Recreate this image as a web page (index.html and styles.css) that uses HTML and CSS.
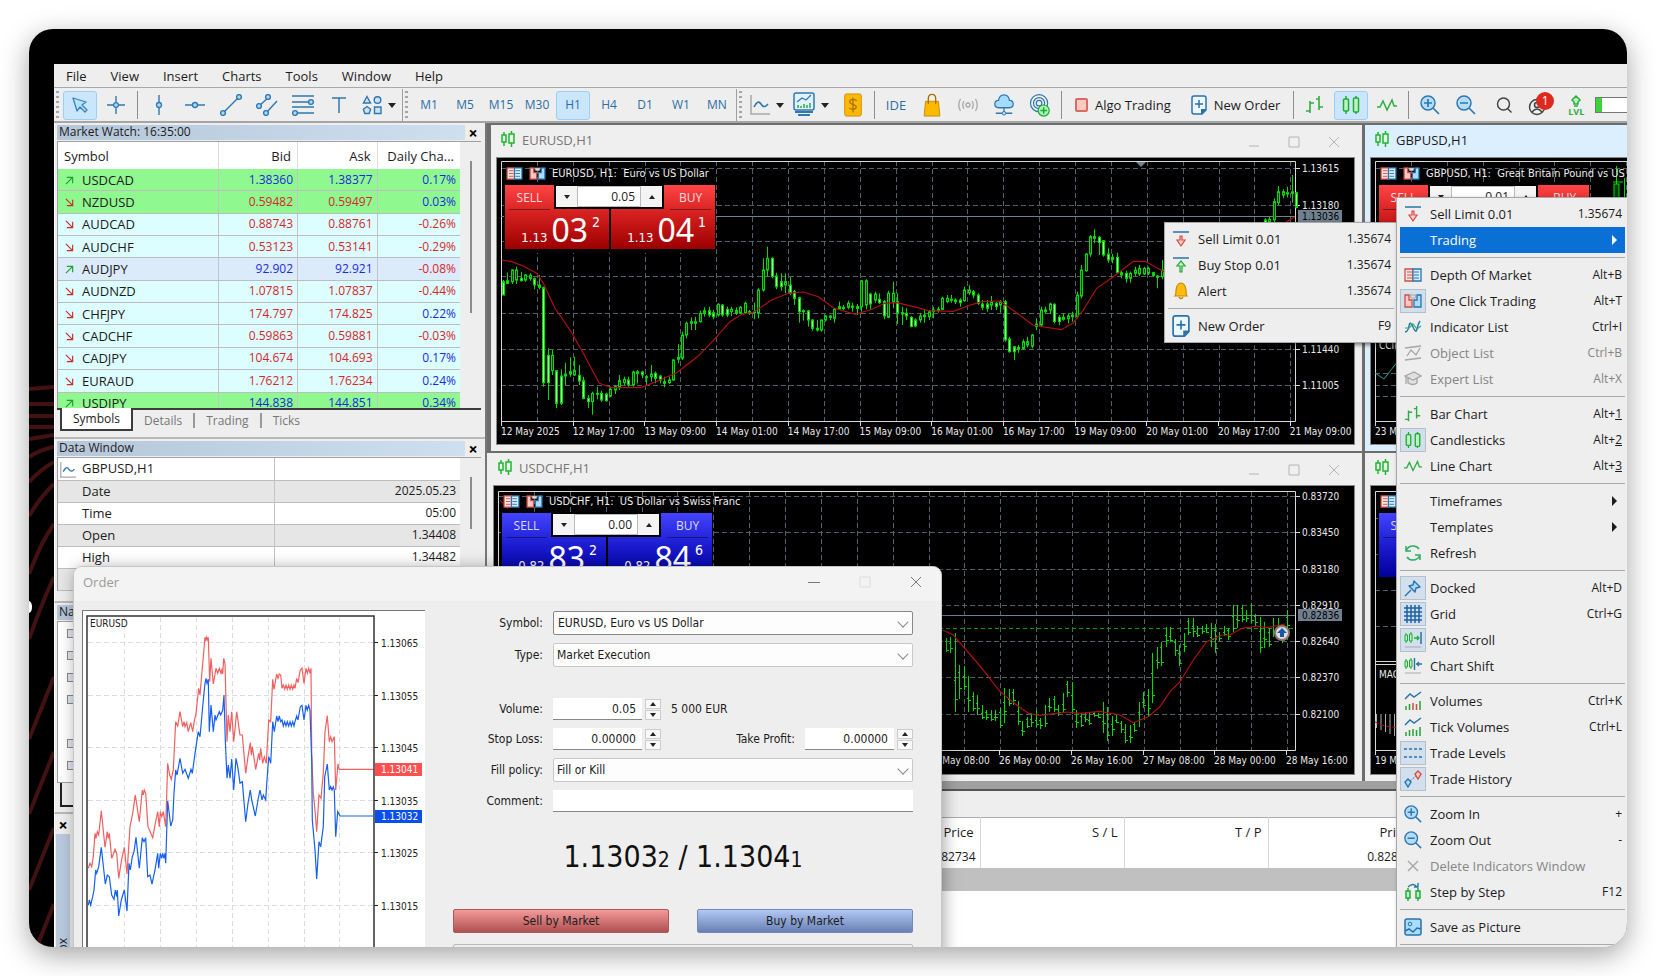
FILE: index.html
```html
<!DOCTYPE html>
<html lang="en">
<head>
<meta charset="utf-8">
<title>Trading terminal</title>
<link rel="stylesheet" href="styles.css">
</head>
<body>
<svg class="sprite" aria-hidden="true">
  <symbol id="i-cursor" viewBox="0 0 20 20"><path d="M3 3l4 13 3-4 5 5 2-2-5-5 4-3z" fill="#b9e1fb" stroke="#3c82b8" stroke-width="1.3" stroke-linejoin="round"/></symbol>
  <symbol id="i-cross" viewBox="0 0 20 20"><path d="M1 10h18M10 1v18" stroke="#2f78b0" stroke-width="1.4"/><circle cx="10" cy="10" r="2.4" fill="#a8dafc" stroke="#2f78b0" stroke-width="1.2"/></symbol>
  <symbol id="i-vline" viewBox="0 0 20 20"><path d="M10 0v20" stroke="#2f78b0" stroke-width="1.4"/><circle cx="10" cy="10" r="2.5" fill="#a8dafc" stroke="#2f78b0" stroke-width="1.3"/></symbol>
  <symbol id="i-hline" viewBox="0 0 20 20"><path d="M0 10h20" stroke="#2f78b0" stroke-width="1.4"/><circle cx="10" cy="10" r="2.5" fill="#a8dafc" stroke="#2f78b0" stroke-width="1.3"/></symbol>
  <symbol id="i-trend" viewBox="0 0 22 22"><path d="M3 19L19 3" stroke="#2f78b0" stroke-width="1.4"/><g fill="#a8dafc" stroke="#2f78b0" stroke-width="1.4"><circle cx="3" cy="19" r="2.4"/><circle cx="19" cy="3" r="2.4"/></g></symbol>
  <symbol id="i-channel" viewBox="0 0 22 22"><path d="M3 12l10-9M10 19L21 7" stroke="#2f78b0" stroke-width="1.4"/><g fill="#a8dafc" stroke="#2f78b0" stroke-width="1.4"><circle cx="3" cy="12" r="2.4"/><circle cx="12" cy="3" r="2.4"/><circle cx="10" cy="19" r="2.4"/></g></symbol>
  <symbol id="i-fibo" viewBox="0 0 22 22"><path d="M0 2h22M0 8h18M0 13h22M4 19h18" stroke="#2f78b0" stroke-width="1.4"/><g fill="#a8dafc" stroke="#2f78b0" stroke-width="1.4"><circle cx="19" cy="8" r="2.4"/><circle cx="3" cy="19" r="2.4"/></g></symbol>
  <symbol id="i-text" viewBox="0 0 20 20"><path d="M3 3h14M10 3v15" stroke="#2f78b0" stroke-width="1.5"/></symbol>
  <symbol id="i-shapes" viewBox="0 0 20 20"><g fill="#a8dafc" fill-opacity=".5" stroke="#2f78b0" stroke-width="1.4"><path d="M5 1.500L8.500 8h-7z"/><circle cx="15.500" cy="5" r="3.300"/><path d="M5 11.500l3.600 2.700-1.400 4.300H2.800l-1.400-4.300z"/><path d="M12.500 12h6.500v6.500h-6.500z"/></g></symbol>
  <symbol id="i-line" viewBox="0 0 20 20"><path d="M1 0v19h19" fill="none" stroke="#a9a9a9" stroke-width="1.5"/><path d="M4 12q4-8 7-3t7 0" fill="none" stroke="#2f78b0" stroke-width="1.6"/></symbol>
  <symbol id="i-ind" viewBox="0 0 22 26"><rect x="1" y="1" width="20" height="17" rx="2" fill="#e2f2fd" stroke="#2f78b0" stroke-width="1.500"/><path d="M4 10l5-4 4 2 5-5" fill="none" stroke="#2f78b0" stroke-width="1.300"/><path d="M5 16v-3M8 16v-2M11 16v-4M14 16v-3M17 16v-5" stroke="#2bae3e" stroke-width="1.500"/><path d="M2 20h18M5 23h12" stroke="#2f78b0" stroke-width="2"/></symbol>
  <symbol id="i-dollar" viewBox="0 0 20 26"><rect x="1" y="1" width="18" height="24" rx="2" fill="#fdb900" stroke="#d08b00"/><path d="M14 8.500c-1-2-7.500-2.300-7.500 1 0 4 7 2 7 5.500 0 3.500-6 3.500-7.500 1M10 5v16" fill="none" stroke="#a97000" stroke-width="1.400"/></symbol>
  <symbol id="i-bag" viewBox="0 0 18 26"><path d="M2 9h14l1.500 16H.5z" fill="#fdb900" stroke="#c98a00"/><path d="M5 12V6q0-4.500 4-4.500T13 6v6" fill="none" stroke="#a97000" stroke-width="1.400"/></symbol>
  <symbol id="i-signal" viewBox="0 0 20 20"><g fill="none" stroke="#a9a9a9" stroke-width="1.300"><circle cx="10" cy="10" r="2"/><path d="M6 6q-2.500 4 0 8M14 6q2.500 4 0 8M2.500 4q-3.500 6 0 12M17.500 4q3.500 6 0 12"/></g></symbol>
  <symbol id="i-cloud" viewBox="0 0 22 24"><path d="M5 15q-4 0-4-4t4-4q1-6 6-6t6 6q4 0 4 4t-4 4z" fill="#a4dcff" stroke="#2f78b0" stroke-width="1.400"/><path d="M11 15v6M2 21h18" stroke="#2f78b0" stroke-width="1.400"/><circle cx="11" cy="21" r="2" fill="#a4dcff" stroke="#2f78b0"/></symbol>
  <symbol id="i-radar" viewBox="0 0 22 26"><g fill="none" stroke="#2f78b0" stroke-width="1.300"><circle cx="10" cy="11" r="9.300"/><circle cx="10" cy="11" r="6"/><circle cx="10" cy="11" r="3"/></g><circle cx="15" cy="19" r="6" fill="#a9f4b0" stroke="#1ba83a" stroke-width="1.300"/><path d="M15 15.500v7M11.500 19h7" stroke="#1ba83a" stroke-width="1.500"/></symbol>
  <symbol id="i-doc" viewBox="0 0 16 20"><path d="M3 1h10q2 0 2 2v12l-4 4H3q-2 0-2-2V3q0-2 2-2z" fill="#eef7fd" stroke="#2873ad" stroke-width="1.500"/><path d="M15 14v1l-4 4h-1v-5z" fill="#2873ad"/><path d="M8 5v8M4 9h8" stroke="#2873ad" stroke-width="1.500"/></symbol>
  <symbol id="i-bars" viewBox="0 0 20 20"><path d="M5 6v12M1 16h4M5 8h4M14 1v14M11 4h3M14 12h4" stroke="#2fae3f" stroke-width="1.600" fill="none"/></symbol>
  <symbol id="i-candles" viewBox="0 0 20 20"><path d="M5 1v18M15 1v18" stroke="#21ad35" stroke-width="1.500"/><rect x="2.500" y="4" width="5" height="12" rx="1" fill="#b9f5c0" stroke="#21ad35" stroke-width="1.500"/><rect x="12.500" y="3" width="5" height="14" rx="1" fill="#b9f5c0" stroke="#21ad35" stroke-width="1.500"/></symbol>
  <symbol id="i-wave" viewBox="0 0 20 20"><path d="M0 12h3l3-6 4 9 5-10 2 6h3" fill="none" stroke="#2fae3f" stroke-width="1.500"/></symbol>
  <symbol id="i-zin" viewBox="0 0 20 20"><circle cx="8" cy="8" r="7" fill="#b3ddfa" stroke="#2f78b0" stroke-width="1.500"/><path d="M8 4v8M4 8h8M13 13l6 6" stroke="#2f78b0" stroke-width="1.700"/></symbol>
  <symbol id="i-zout" viewBox="0 0 20 20"><circle cx="8" cy="8" r="7" fill="#b3ddfa" stroke="#2f78b0" stroke-width="1.500"/><path d="M4 8h8M13 13l6 6" stroke="#2f78b0" stroke-width="1.700"/></symbol>
  <symbol id="i-search" viewBox="0 0 20 20"><circle cx="9.500" cy="9" r="6" fill="none" stroke="#444" stroke-width="1.500"/><path d="M13.500 13.500l4 4" stroke="#444" stroke-width="1.500"/></symbol>
  <symbol id="i-user" viewBox="0 0 24 24"><circle cx="9" cy="14" r="7.500" fill="none" stroke="#444" stroke-width="1.500"/><circle cx="9" cy="12" r="2.500" fill="none" stroke="#444" stroke-width="1.500"/><path d="M4 19q5-6 10 0" fill="none" stroke="#444" stroke-width="1.500"/></symbol>
  <symbol id="i-up" viewBox="0 0 16 12"><path d="M8 1l4 4-2 2v2H6V7L4 5z" fill="#b9f5c0" stroke="#2fae3f" stroke-width="1.500"/><path d="M6 11h4" stroke="#2fae3f" stroke-width="1.500"/></symbol>
  <symbol id="i-mini" viewBox="0 0 14 16"><path d="M3 1v14M10.500 0v16" stroke="#21b52e" stroke-width="1.500"/><path d="M1 4h4v7H1zM8 3h5v9H8z" fill="#e9fbe9" stroke="#21b52e" stroke-width="1.500"/></symbol>
  <symbol id="i-depth" viewBox="0 0 18 14"><path d="M1 1h8v12H1z" fill="#ffe6e2" stroke="#d14d48" stroke-width="1.300"/><path d="M9 1h8v12H9z" fill="#d8efff" stroke="#2873ad" stroke-width="1.300"/><path d="M3 4h5M3 7h5M3 10h5" stroke="#d14d48"/><path d="M10 4h5M10 7h5M10 10h5" stroke="#2873ad"/></symbol>
  <symbol id="i-oct" viewBox="0 0 18 14"><path d="M1 1h4v5h3v7H1z" fill="#ffc9c2" stroke="#d14d48" stroke-width="1.300"/><path d="M17 1h-4v5h-3v7h7z" fill="#a9dcff" stroke="#2873ad" stroke-width="1.300"/><path d="M6 1h6l-1 3H7z" fill="#ddd" stroke="#999" stroke-width=".8"/></symbol>
  <symbol id="i-selllimit" viewBox="0 0 18 16"><path d="M1 1h16" stroke="#2873ad" stroke-width="1.500"/><path d="M8 5v4H5l4 6 4-6h-3V5z" fill="#ffc9c2" stroke="#d14d48" stroke-width="1.200"/></symbol>
  <symbol id="i-buystop" viewBox="0 0 18 16"><path d="M1 1h16" stroke="#2873ad" stroke-width="1.500"/><path d="M8 15V9H5l4-5 4 5h-3v6z" fill="#b9f5c0" stroke="#21a537" stroke-width="1.200"/></symbol>
  <symbol id="i-bell" viewBox="0 0 18 18"><path d="M3 14q1-1 1-6 1-7 5-7t5 7q0 5 1 6z" fill="#fdbb10" stroke="#c98a00" stroke-width="1.200"/><path d="M7 15q2 3 4 0" fill="none" stroke="#c98a00" stroke-width="1.500"/></symbol>
  <symbol id="i-indlist" viewBox="0 0 18 16"><path d="M1 13q3 0 4-6t4 1 4 2 3-8" fill="none" stroke="#2873ad" stroke-width="1.400"/><path d="M1 9h4l4-4 4 5 4-3" fill="none" stroke="#2fae6f" stroke-width="1.200"/></symbol>
  <symbol id="i-objlist" viewBox="0 0 18 16"><path d="M1 3l16-2M1 15l16-2M3 11l4-6 5 5 4-7" fill="none" stroke="#a5a5a5" stroke-width="1.300"/></symbol>
  <symbol id="i-expert" viewBox="0 0 18 16"><path d="M1 5l9-4 7 4-8 4zM4 7v5q5 3 9 0V7M2 6v7" fill="#e0e0e0" stroke="#a5a5a5" stroke-width="1.300"/></symbol>
  <symbol id="i-refresh" viewBox="0 0 18 18"><path d="M2 7q2-5 7-5 4 0 6 3M16 11q-2 5-7 5-4 0-6-3M2 2v5h5M16 16v-5h-5" fill="none" stroke="#2fae5f" stroke-width="1.500"/></symbol>
  <symbol id="i-pin" viewBox="0 0 18 18"><path d="M1 17l6-6M10 2l6 6-4 1-1 4-6-6 4-1z" fill="#a9dcff" stroke="#2873ad" stroke-width="1.400" stroke-linejoin="round"/></symbol>
  <symbol id="i-grid" viewBox="0 0 18 18"><path d="M3 0v18M7 0v18M11 0v18M15 0v18M0 3h18M0 7h18M0 11h18M0 15h18" stroke="#1d62a5" stroke-width="1.500"/></symbol>
  <symbol id="i-scroll" viewBox="0 0 18 18"><path d="M2 2v10M7 1v11" stroke="#21ad35"/><path d="M1 4h2.500v6H1zM5.500 3H8v7H5.500z" fill="#b9f5c0" stroke="#21ad35"/><path d="M10 7h5M13 5l2 2-2 2" fill="none" stroke="#21ad35" stroke-width="1.300"/><path d="M17 1v12" stroke="#2873ad" stroke-width="1.500"/><path d="M1 16h16" stroke="#aaa"/></symbol>
  <symbol id="i-shift" viewBox="0 0 18 18"><path d="M2 2v10M7 1v11" stroke="#21ad35"/><path d="M1 4h2.500v6H1zM5.500 3H8v7H5.500z" fill="#b9f5c0" stroke="#21ad35"/><path d="M10.500 1v12M12 7h6M15 5l-2 2 2 2" fill="none" stroke="#2873ad" stroke-width="1.400"/><path d="M1 16h16" stroke="#aaa"/></symbol>
  <symbol id="i-vol" viewBox="0 0 18 18"><path d="M1 7l5-5 4 3 7-5" fill="none" stroke="#2873ad" stroke-width="1.500"/><path d="M2 18v-4M5.500 18v-6M16 18V9" stroke="#21a537" stroke-width="1.500"/><path d="M9 18v-7M12.500 18v-6" stroke="#d14d48" stroke-width="1.500"/></symbol>
  <symbol id="i-tick" viewBox="0 0 18 18"><path d="M1 7l5-5 4 3 7-5" fill="none" stroke="#2873ad" stroke-width="1.500"/><path d="M2 18v-4M5.500 18v-6M9 18v-7M12.500 18v-6M16 18V9" stroke="#21a537" stroke-width="1.500"/></symbol>
  <symbol id="i-levels" viewBox="0 0 18 18"><path d="M0 5h18M0 13h18" stroke="#2873ad" stroke-width="1.500" stroke-dasharray="3 2"/></symbol>
  <symbol id="i-hist" viewBox="0 0 18 18"><path d="M6 11l6-5" stroke="#2873ad" stroke-dasharray="2 1.500"/><path d="M4 17l-3-5 3-3 3 3z" fill="#a9dcff" stroke="#2873ad" stroke-width="1.400"/><path d="M14 9l-3-5 3-3 3 3z" fill="#ffc9c2" stroke="#d14d48" stroke-width="1.400"/></symbol>
  <symbol id="i-x" viewBox="0 0 18 18"><path d="M4 4l10 10M14 4L4 14" stroke="#aaa" stroke-width="1.500"/></symbol>
  <symbol id="i-step" viewBox="0 0 18 18"><path d="M4 5v13M14 5v13" stroke="#21a537" stroke-width="1.400"/><path d="M2 8h4v7H2zM12 8h4v7h-4z" fill="#b9f5c0" stroke="#21a537" stroke-width="1.400"/><path d="M4 4q5-5 9 0M14 0v4h-4" fill="none" stroke="#2873ad" stroke-width="1.400"/></symbol>
  <symbol id="i-pic" viewBox="0 0 18 18"><rect x="1" y="1" width="16" height="16" rx="2" fill="#a9dcff" stroke="#2873ad" stroke-width="1.500"/><circle cx="6" cy="6" r="1.800" fill="none" stroke="#2873ad"/><path d="M1 13l4-2 4 3 4-4 4 1" fill="none" stroke="#2873ad" stroke-width="1.500"/></symbol>
  <symbol id="i-aup" viewBox="0 0 10 10"><path d="M1 9l7.500-7.500M2 1.500h6.500V8" fill="none" stroke="#1fa32f" stroke-width="1.300"/></symbol>
  <symbol id="i-adn" viewBox="0 0 10 10"><path d="M1 1l7.500 7.500M2 8.500h6.500V2" fill="none" stroke="#d02b2b" stroke-width="1.300"/></symbol>
</svg>

<main class="frame">
  <svg class="frame-art" width="25" height="883" aria-hidden="true">
    <g fill="none" stroke="#421112" stroke-width="4">
      <path d="M0 325l25-2M0 340h25M0 352h25M0 363h25M0 375l25-4M0 393q12-8 25-10M0 418q12-13 25-20M0 452q12-20 25-32M0 510q12-32 25-50M0 575q12-34 25-62M0 675l25-62M0 750l25-62M0 826l25-62M0 902l25-62M0 976l25-62"/>
    </g>
    <path d="M0 537q3 1 3 6t-3 6z" fill="#fff"/>
  </svg>
  <div class="app">
    <nav class="menubar" aria-label="Main menu">
      <button>File</button><button>View</button><button>Insert</button><button>Charts</button><button>Tools</button><button>Window</button><button>Help</button>
    </nav>
    <div class="toolbar" role="toolbar">
      <i class="grip"></i>
      <button class="tool tool--on" aria-label="Cursor"><svg width="20" height="20"><use href="#i-cursor"/></svg></button>
      <button class="tool" aria-label="Crosshair"><svg width="20" height="20"><use href="#i-cross"/></svg></button>
      <i class="sep"></i>
      <button class="tool" aria-label="Vertical line"><svg width="20" height="20"><use href="#i-vline"/></svg></button>
      <button class="tool" aria-label="Horizontal line"><svg width="20" height="20"><use href="#i-hline"/></svg></button>
      <button class="tool" aria-label="Trendline"><svg width="22" height="22"><use href="#i-trend"/></svg></button>
      <button class="tool" aria-label="Channel"><svg width="22" height="22"><use href="#i-channel"/></svg></button>
      <button class="tool" aria-label="Fibonacci"><svg width="22" height="22"><use href="#i-fibo"/></svg></button>
      <button class="tool" aria-label="Text"><svg width="20" height="20"><use href="#i-text"/></svg></button>
      <button class="tool tool--combo" aria-label="Shapes"><svg width="20" height="20"><use href="#i-shapes"/></svg><i class="caret"></i></button>
      <i class="edge"></i><i class="grip"></i>
      <button class="tool">M1</button><button class="tool">M5</button><button class="tool">M15</button><button class="tool">M30</button><button class="tool tool--on">H1</button><button class="tool">H4</button><button class="tool">D1</button><button class="tool">W1</button><button class="tool">MN</button>
      <i class="edge"></i><i class="grip"></i>
      <button class="tool tool--combo" aria-label="Chart type"><svg width="20" height="20"><use href="#i-line"/></svg><i class="caret"></i></button>
      <button class="tool tool--combo tool--last" aria-label="Indicators"><svg width="22" height="26"><use href="#i-ind"/></svg><i class="caret"></i></button>
      <button class="tool" aria-label="Quotes"><svg width="20" height="24"><use href="#i-dollar"/></svg></button>
      <i class="sep"></i>
      <button class="tool tool--ide">IDE</button>
      <button class="tool" aria-label="Market"><svg width="18" height="24"><use href="#i-bag"/></svg></button>
      <button class="tool" aria-label="Signals"><svg width="20" height="20"><use href="#i-signal"/></svg></button>
      <button class="tool" aria-label="Cloud"><svg width="22" height="22"><use href="#i-cloud"/></svg></button>
      <button class="tool" aria-label="VPS"><svg width="22" height="24"><use href="#i-radar"/></svg></button>
      <i class="sep"></i>
      <button class="tool tool--wide"><i class="stop"></i>Algo Trading</button>
      <button class="tool tool--wide"><svg width="16" height="20"><use href="#i-doc"/></svg>New Order</button>
      <i class="sep"></i>
      <button class="tool" aria-label="Bars"><svg width="20" height="20"><use href="#i-bars"/></svg></button>
      <button class="tool tool--on" aria-label="Candles"><svg width="20" height="20"><use href="#i-candles"/></svg></button>
      <button class="tool" aria-label="Line"><svg width="20" height="20"><use href="#i-wave"/></svg></button>
      <i class="sep"></i>
      <button class="tool" aria-label="Zoom in"><svg width="20" height="20"><use href="#i-zin"/></svg></button>
      <button class="tool" aria-label="Zoom out"><svg width="20" height="20"><use href="#i-zout"/></svg></button>
      <button class="tool tool--gap" aria-label="Search"><svg width="20" height="20"><use href="#i-search"/></svg></button>
      <button class="tool tool--user" aria-label="Account"><svg width="24" height="24"><use href="#i-user"/></svg><b class="badge">1</b></button>
      <button class="tool tool--lvl"><svg width="16" height="12"><use href="#i-up"/></svg>LVL</button>
      <i class="meter"></i>
    </div>

    <div class="workspace">
      <aside class="sidebar">
        <section class="panel panel--market">
          <header class="panel-title"><h2>Market Watch: 16:35:00</h2><button aria-label="Close">×</button></header>
          <div class="panel-body">
            <table class="quotes">
              <thead><tr><th>Symbol</th><th>Bid</th><th>Ask</th><th>Daily Cha...</th></tr></thead>
              <tbody>
                <tr class="hot up"><td><svg width="9" height="9"><use href="#i-aup"/></svg>USDCAD</td><td>1.38360</td><td>1.38377</td><td class="pos">0.17%</td></tr>
                <tr class="hot"><td><svg width="9" height="9"><use href="#i-adn"/></svg>NZDUSD</td><td>0.59482</td><td>0.59497</td><td class="pos">0.03%</td></tr>
                <tr><td><svg width="9" height="9"><use href="#i-adn"/></svg>AUDCAD</td><td>0.88743</td><td>0.88761</td><td>-0.26%</td></tr>
                <tr><td><svg width="9" height="9"><use href="#i-adn"/></svg>AUDCHF</td><td>0.53123</td><td>0.53141</td><td>-0.29%</td></tr>
                <tr class="sel up"><td><svg width="9" height="9"><use href="#i-aup"/></svg>AUDJPY</td><td>92.902</td><td>92.921</td><td class="neg">-0.08%</td></tr>
                <tr><td><svg width="9" height="9"><use href="#i-adn"/></svg>AUDNZD</td><td>1.07815</td><td>1.07837</td><td>-0.44%</td></tr>
                <tr><td><svg width="9" height="9"><use href="#i-adn"/></svg>CHFJPY</td><td>174.797</td><td>174.825</td><td class="pos">0.22%</td></tr>
                <tr><td><svg width="9" height="9"><use href="#i-adn"/></svg>CADCHF</td><td>0.59863</td><td>0.59881</td><td>-0.03%</td></tr>
                <tr><td><svg width="9" height="9"><use href="#i-adn"/></svg>CADJPY</td><td>104.674</td><td>104.693</td><td class="pos">0.17%</td></tr>
                <tr><td><svg width="9" height="9"><use href="#i-adn"/></svg>EURAUD</td><td>1.76212</td><td>1.76234</td><td class="pos">0.24%</td></tr>
                <tr class="hot up"><td><svg width="9" height="9"><use href="#i-aup"/></svg>USDJPY</td><td>144.838</td><td>144.851</td><td class="pos">0.34%</td></tr>
              </tbody>
            </table>
            <div class="rail"><i class="thumb"></i></div>
          </div>
          <div class="tabs" role="tablist">
            <button class="tab tab--on" role="tab">Symbols</button><button class="tab" role="tab">Details</button><button class="tab" role="tab">Trading</button><button class="tab" role="tab">Ticks</button>
          </div>
        </section>
        <section class="panel panel--data">
          <header class="panel-title"><h2>Data Window</h2><button aria-label="Close">×</button></header>
          <div class="panel-body">
            <table class="values">
              <tr><th><svg width="16" height="16"><use href="#i-line"/></svg>GBPUSD,H1</th><td></td></tr>
              <tr><th>Date</th><td>2025.05.23</td></tr>
              <tr><th>Time</th><td>05:00</td></tr>
              <tr><th>Open</th><td>1.34408</td></tr>
              <tr><th>High</th><td>1.34482</td></tr>
              <tr><th>&nbsp;</th><td></td></tr>
            </table>
            <div class="rail"><i class="thumb thumb--short"></i></div>
          </div>
        </section>
        <section class="panel panel--nav">
          <header class="panel-title"><h2>Navigator</h2></header>
          <div class="tree"><i></i><i></i><i></i><i></i><i class="skip"></i><i></i><i></i></div>
          <div class="tree-foot"></div>
        </section>
        <section class="panel panel--box">
          <button class="box-close" aria-label="Close">×</button>
          <h2 class="box-title">Toolbox</h2>
        </section>
      </aside>

      <div class="desk">
        <div class="charts">
          <section class="chart-window chart-window--first">
            <header><svg width="14" height="16"><use href="#i-mini"/></svg><h2>EURUSD,H1</h2><span class="win-btns"><button aria-label="Minimize"><svg width="12" height="12"><path d="M1 10h10"/></svg></button><button aria-label="Maximize"><svg width="12" height="12"><path d="M1 1h10v10H1z"/></svg></button><button aria-label="Close"><svg width="12" height="12"><path d="M1 1l10 10M11 1L1 11"/></svg></button></span></header>
            <div class="chart">
              <svg class="plot" id="plot-eurusd" width="857" height="286"></svg>
              <p class="chart-name"><svg width="17" height="13"><use href="#i-depth"/></svg><svg width="17" height="13"><use href="#i-oct"/></svg>EURUSD, H1:&nbsp; Euro vs US Dollar</p>
              <div class="trade">
                <button class="deal"><span>SELL</span><em>1.13</em><strong>03</strong><sup>2</sup></button><button class="deal deal--buy"><span>BUY</span><em>1.13</em><strong>04</strong><sup>1</sup></button>
                <div class="lot"><button aria-label="Less"><i class="tri tri--down"></i></button><input aria-label="Volume" value="0.05"><button aria-label="More"><i class="tri"></i></button></div>
              </div>
            </div>
          </section>
          <section class="chart-window chart-window--side chart-window--active">
            <header><svg width="14" height="16"><use href="#i-mini"/></svg><h2>GBPUSD,H1</h2></header>
            <div class="chart">
              <svg class="plot" id="plot-gbpusd" width="857" height="286"></svg>
              <p class="chart-name"><svg width="17" height="13"><use href="#i-depth"/></svg><svg width="17" height="13"><use href="#i-oct"/></svg>GBPUSD, H1:&nbsp; Great Britain Pound vs US</p>
              <div class="trade">
                <button class="deal"><span>SELL</span></button><button class="deal deal--buy"><span>BUY</span></button>
                <div class="lot"><button aria-label="Less"><i class="tri tri--down"></i></button><input aria-label="Volume" value="0.01"><button aria-label="More"><i class="tri"></i></button></div>
              </div>
            </div>
          </section>
          <section class="chart-window">
            <header><svg width="14" height="16"><use href="#i-mini"/></svg><h2>USDCHF,H1</h2><span class="win-btns"><button aria-label="Minimize"><svg width="12" height="12"><path d="M1 10h10"/></svg></button><button aria-label="Maximize"><svg width="12" height="12"><path d="M1 1h10v10H1z"/></svg></button><button aria-label="Close"><svg width="12" height="12"><path d="M1 1l10 10M11 1L1 11"/></svg></button></span></header>
            <div class="chart">
              <svg class="plot" id="plot-usdchf" width="860" height="287"></svg>
              <p class="chart-name"><svg width="17" height="13"><use href="#i-depth"/></svg><svg width="17" height="13"><use href="#i-oct"/></svg>USDCHF, H1:&nbsp; US Dollar vs Swiss Franc</p>
              <div class="trade trade--blue">
                <button class="deal"><span>SELL</span><em>0.82</em><strong>83</strong><sup>2</sup></button><button class="deal deal--buy"><span>BUY</span><em>0.82</em><strong>84</strong><sup>6</sup></button>
                <div class="lot"><button aria-label="Less"><i class="tri tri--down"></i></button><input aria-label="Volume" value="0.00"><button aria-label="More"><i class="tri"></i></button></div>
              </div>
            </div>
          </section>
          <section class="chart-window chart-window--side">
            <header><svg width="14" height="16"><use href="#i-mini"/></svg></header>
            <div class="chart">
              <svg class="plot" id="plot-last" width="857" height="287"></svg>
              <p class="chart-name"><svg width="17" height="13"><use href="#i-depth"/></svg></p>
              <div class="trade trade--blue">
                <button class="deal"><span>SELL</span></button><button class="deal deal--buy"><span>BUY</span></button>
              </div>
            </div>
          </section>
        </div>
        <section class="toolbox">
          <table class="positions">
            <thead><tr><th>Price</th><th>S / L</th><th>T / P</th><th>Price</th><th></th></tr></thead>
            <tbody><tr><td>0.82734</td><td></td><td></td><td>0.82836</td><td></td></tr></tbody>
          </table>
          <div class="balance"></div>
        </section>
      </div>
    </div>

    <section class="dialog" role="dialog" aria-label="Order">
      <header><h2>Order</h2><span class="dlg-btns"><button aria-label="Minimize"><svg width="12" height="12"><path d="M0 6.500h12"/></svg></button><button aria-label="Maximize" disabled><svg width="12" height="12"><path d="M1 1h10v10H1z"/></svg></button><button aria-label="Close"><svg width="12" height="12"><path d="M1 1l10 10M11 1L1 11"/></svg></button></span></header>
      <div class="dlg-body">
        <div class="tick-chart"><svg id="plot-ticks" width="343" height="360"></svg></div>
        <form class="order">
          <label for="f-symbol">Symbol:</label>
          <div class="pick pick--main"><select id="f-symbol"><option>EURUSD, Euro vs US Dollar</option></select></div>
          <label for="f-type">Type:</label>
          <div class="pick"><select id="f-type"><option>Market Execution</option></select></div>
          <label class="row-volume" for="f-vol">Volume:</label>
          <div class="row-fields row-volume"><input id="f-vol" value="0.05"><span class="spin"><button type="button" aria-label="Up"><i class="tri"></i></button><button type="button" aria-label="Down"><i class="tri tri--down"></i></button></span><span class="unit">5 000 EUR</span></div>
          <label for="f-sl">Stop Loss:</label>
          <div class="row-fields"><input id="f-sl" value="0.00000"><span class="spin"><button type="button" aria-label="Up"><i class="tri"></i></button><button type="button" aria-label="Down"><i class="tri tri--down"></i></button></span><label class="tp" for="f-tp">Take Profit:</label><input id="f-tp" value="0.00000"><span class="spin"><button type="button" aria-label="Up"><i class="tri"></i></button><button type="button" aria-label="Down"><i class="tri tri--down"></i></button></span></div>
          <label for="f-fill">Fill policy:</label>
          <div class="pick"><select id="f-fill"><option>Fill or Kill</option></select></div>
          <label for="f-com">Comment:</label>
          <input id="f-com" class="comment">
          <p class="price">1.1303<small>2</small> / 1.1304<small>1</small></p>
          <div class="actions"><button type="button" class="act act--sell">Sell by Market</button><button type="button" class="act act--buy">Buy by Market</button></div>
          <div class="note"></div>
        </form>
      </div>
    </section>

    <div class="menu menu--sub" role="menu">
      <button><svg width="18" height="16"><use href="#i-selllimit"/></svg>Sell Limit 0.01<kbd>1.35674</kbd></button>
      <button><svg width="18" height="16"><use href="#i-buystop"/></svg>Buy Stop 0.01<kbd>1.35674</kbd></button>
      <button><svg width="18" height="18"><use href="#i-bell"/></svg>Alert<kbd>1.35674</kbd></button>
      <hr>
      <button><svg width="18" height="18"><use href="#i-doc"/></svg>New Order<kbd>F9</kbd></button>
    </div>

    <div class="menu menu--main" role="menu">
      <button><svg width="18" height="16"><use href="#i-selllimit"/></svg>Sell Limit 0.01<kbd>1.35674</kbd></button>
      <button class="hover"><svg width="18" height="16"></svg>Trading<i class="more"></i></button>
      <hr>
      <button><svg width="18" height="14"><use href="#i-depth"/></svg>Depth Of Market<kbd>Alt+B</kbd></button>
      <button class="on"><svg width="18" height="14"><use href="#i-oct"/></svg>One Click Trading<kbd>Alt+T</kbd></button>
      <button><svg width="18" height="16"><use href="#i-indlist"/></svg>Indicator List<kbd>Ctrl+I</kbd></button>
      <button disabled><svg width="18" height="16"><use href="#i-objlist"/></svg>Object List<kbd>Ctrl+B</kbd></button>
      <button disabled><svg width="18" height="16"><use href="#i-expert"/></svg>Expert List<kbd>Alt+X</kbd></button>
      <hr>
      <button><svg width="18" height="16"><use href="#i-bars"/></svg>Bar Chart<kbd>Alt+<u>1</u></kbd></button>
      <button class="on"><svg width="18" height="18"><use href="#i-candles"/></svg>Candlesticks<kbd>Alt+<u>2</u></kbd></button>
      <button><svg width="18" height="18"><use href="#i-wave"/></svg>Line Chart<kbd>Alt+<u>3</u></kbd></button>
      <hr>
      <button><svg width="18" height="18"></svg>Timeframes<i class="more"></i></button>
      <button><svg width="18" height="18"></svg>Templates<i class="more"></i></button>
      <button><svg width="18" height="18"><use href="#i-refresh"/></svg>Refresh</button>
      <hr>
      <button class="on"><svg width="18" height="18"><use href="#i-pin"/></svg>Docked<kbd>Alt+D</kbd></button>
      <button class="on"><svg width="18" height="18"><use href="#i-grid"/></svg>Grid<kbd>Ctrl+G</kbd></button>
      <button class="on"><svg width="18" height="18"><use href="#i-scroll"/></svg>Auto Scroll</button>
      <button><svg width="18" height="18"><use href="#i-shift"/></svg>Chart Shift</button>
      <hr>
      <button><svg width="18" height="18"><use href="#i-vol"/></svg>Volumes<kbd>Ctrl+K</kbd></button>
      <button><svg width="18" height="18"><use href="#i-tick"/></svg>Tick Volumes<kbd>Ctrl+L</kbd></button>
      <button class="on"><svg width="18" height="18"><use href="#i-levels"/></svg>Trade Levels</button>
      <button class="on"><svg width="18" height="18"><use href="#i-hist"/></svg>Trade History</button>
      <hr>
      <button><svg width="18" height="18"><use href="#i-zin"/></svg>Zoom In<kbd>+</kbd></button>
      <button><svg width="18" height="18"><use href="#i-zout"/></svg>Zoom Out<kbd>-</kbd></button>
      <button disabled><svg width="18" height="18"><use href="#i-x"/></svg>Delete Indicators Window</button>
      <button><svg width="18" height="18"><use href="#i-step"/></svg>Step by Step<kbd>F12</kbd></button>
      <hr>
      <button><svg width="18" height="18"><use href="#i-pic"/></svg>Save as Picture</button>
      <hr>
    </div>
  </div>
</main>
<script src="charts.js"></script>
</body>
</html>
```
FILE: charts.js
```js
// Draws the price charts. Series are stored in thirds of a pixel.
const NS = 'http://www.w3.org/2000/svg';

function add(svg, tag, attrs, text) {
  const el = document.createElementNS(NS, tag);
  for (const k in attrs) el.setAttribute(k, attrs[k]);
  if (text !== undefined) el.textContent = text;
  svg.appendChild(el);
  return el;
}

function grid(svg, o) {
  for (let x = o.gx; x < o.right; x += 35.87) add(svg, 'path', { class: 'grid', d: `M${Math.round(x) + .5} ${o.top}V${o.bottom}` });
  o.rows.forEach(y => add(svg, 'path', { class: 'grid', d: `M${o.left} ${y + .5}H${o.right}` }));
  add(svg, 'path', { class: 'axis', d: `M${o.left + .5} ${o.bottom + .5}V${o.top + .5}H${o.right + .5}V${o.bottom + .5}H${o.left}` });
  o.prices.forEach((p, i) => {
    if (!p) return;
    add(svg, 'path', { class: 'axis', d: `M${o.right} ${o.rows[i] + .5}h5` });
    add(svg, 'text', { x: o.right + 7, y: o.rows[i] + 4 }, p);
  });
  o.times.forEach(([x, t]) => {
    add(svg, 'path', { class: 'axis', d: `M${Math.round(x) + .5} ${o.bottom}v5` });
    add(svg, 'text', { x, y: o.bottom + 14 }, t);
  });
}

function line(svg, cls, pts, dx, dy) {
  const d = pts.trim().split(/\s+/).map(p => p.split(',').map(Number)).map(([x, y]) => `${(x / 3 + dx).toFixed(1)},${(y / 3 + dy).toFixed(1)}`).join(' ');
  add(svg, 'polyline', { class: cls, points: d });
}

// EURUSD: high, body top, body bottom, low
const eur = `480,485,525,525 458,482,490,492 448,450,485,492 440,450,480,492 455,475,482,485 462,465,480,485 460,466,475,482 472,476,495,508 465,495,502,508 500,503,788,800 685,706,788,840 690,706,752,765 750,752,850,865 748,768,850,855 728,762,768,795 712,755,762,770 710,752,765,768 735,766,783,795 770,782,835,838 825,835,845,865 815,820,845,884 800,820,822,838 812,820,840,845 818,822,842,845 800,808,828,832 795,800,810,822 765,782,800,810 770,778,788,795 770,780,795,800 752,756,795,800 750,755,760,790 752,756,765,775 765,770,772,795 735,762,770,785 755,760,775,790 765,768,780,790 770,785,790,802 770,780,788,792 718,720,780,782 672,712,718,730 635,645,715,720 605,610,645,655 592,605,610,630 590,605,610,630 572,580,605,608 562,572,580,590 560,572,585,592 570,578,590,598 550,553,585,590 552,555,585,590 560,568,585,592 560,568,575,588 562,572,580,585 558,562,580,582 545,550,578,580 570,575,580,585 548,575,578,598 505,510,578,595 415,450,510,515 380,415,450,470 412,415,470,475 458,468,500,508 460,485,500,512 460,485,495,520 470,495,520,525 510,515,535,555 530,533,575,608 568,572,575,602 570,573,600,620 598,600,625,632 600,625,630,635 598,600,630,635 585,588,600,605 585,588,592,600 565,568,595,608 545,560,568,570 555,562,566,570 542,550,562,568 548,558,562,575 552,560,565,585 480,482,560,575 478,482,555,568 518,522,552,570 515,522,540,548 520,538,548,552 540,545,588,598 512,520,592,595 485,520,545,565 520,545,580,612 560,578,582,615 565,580,588,600 588,592,620,622 595,600,618,622 580,588,600,608 570,585,590,608 570,575,590,600 560,570,575,595 560,568,572,578 530,535,568,570 525,535,545,550 525,538,540,548 535,540,545,552 535,540,548,560 500,510,542,545 495,510,518,525 510,515,525,535 520,525,550,555 540,552,562,570 540,552,565,575 528,545,555,570 545,550,560,570 540,545,555,578 540,545,660,665 650,657,695,698 678,680,695,720 675,682,688,698 658,665,685,690 650,665,675,682 643,645,678,685 595,612,620,630 560,570,615,618 560,570,575,580 548,552,570,582 550,553,605,610 585,592,605,615 580,592,598,602 580,588,596,610 575,585,590,605 515,525,590,595 435,450,528,535 400,402,452,455 345,350,402,410 328,350,355,370 348,352,368,405 360,362,405,410 385,402,420,428 402,412,418,430 398,412,458,460 450,458,465,475 452,460,475,488 455,460,475,488 440,450,460,468 435,445,462,468 440,445,462,465 440,445,460,465 455,458,466,470 465,468,472,505 420,450,470,478 430,455,468,480`;
const eurTail = '295,300,340,350 290,298,305,330 235,245,300,306 198,215,248,255 208,215,225,235 200,218,222,232 165,215,220,248 215,218,262,265';
const eurMa = '65,420 95,425 130,438 170,460 190,490 225,565 270,630 310,700 358,790 395,803 485,802 540,780 590,758 650,712 700,662 750,605 785,583 820,577 875,540 925,520 970,516 1015,530 1060,563 1125,583 1170,570 1215,550 1250,548 1310,562 1345,572 1420,574 1470,556 1505,545 1560,543 1605,575 1660,616 1744,629 1780,608 1810,570 1850,505 1900,470 1960,424 1995,424 2052,455 2120,470 2300,400 2420,305 2445,290';

function candles(svg, data, start, dx, dy) {
  let prev = 0;
  data.split(' ').forEach((c, i) => {
    const [h, a, b, l] = c.split(',').map(v => v / 3 + dy);
    const x = Math.round((68 + 13.45 * (start + i)) / 3 + dx);
    const falling = (a + b) / 2 > prev;
    prev = (a + b) / 2;
    add(svg, 'path', { class: 'wick', d: `M${x + .5} ${h.toFixed(1)}V${l.toFixed(1)}` });
    add(svg, 'rect', { class: falling ? 'fall' : 'rise', x: x - .5, y: a.toFixed(1), width: 2, height: Math.max(1, b - a).toFixed(1) });
  });
}

const e = document.getElementById('plot-eurusd');
const times = ['12 May 2025', '12 May 17:00', '13 May 09:00', '14 May 01:00', '14 May 17:00', '15 May 09:00', '16 May 01:00', '16 May 17:00', '19 May 09:00', '20 May 01:00', '20 May 17:00', '21 May 09:00'];
grid(e, { left: 4, right: 798, top: 3, bottom: 263, gx: 40, rows: [10, 47, 83, 118, 155, 191, 227], prices: ['1.13615', '1.13180', '', '', '', '1.11440', '1.11005'], times: times.map((t, i) => [4 + i * 71.7, t]) });
add(e, 'path', { class: 'bid', d: 'M4 58.500H798' });
candles(e, eur, 0, -17, -38);
candles(e, eurTail, 170, -17, -38);
line(e, 'ma', eurMa, -17, -38);
add(e, 'path', { d: 'M639 4h10l-5 5z', fill: '#708090' });
add(e, 'rect', { x: 801, y: 52, width: 44, height: 12, fill: '#708090' });
add(e, 'text', { x: 805, y: 62, class: 'dark' }, '1.13036');

// USDCHF: high, low
const chf = '565,605 560,608 550,785 645,748 648,720 678,785 725,782 735,795 765,808 780,810 780,812 780,812 775,835 715,820 718,768 718,765 752,825 812,858 800,835 790,830 780,830 805,838 765,830 745,785 738,785 765,798 730,785 692,742 695,792 780,835 790,830 790,815 790,825 785,800 790,805 755,850 770,872 798,858 795,820 812,850 822,880 825,878 815,845 755,830 725,775 718,802 610,758 592,658 575,648 530,590 530,575 568,618 585,648 550,605 505,555 505,560 528,562 528,552 522,548 520,590 522,608 545,572 528,558 535,570 465,545 465,535 465,515 480,515 460,520 492,528 500,610 515,595 535,592 505,560 505,540 530,578 480,535';
const u = document.getElementById('plot-usdchf');
grid(u, { left: 4, right: 801, top: 5, bottom: 264, gx: 40, rows: [10, 46, 83, 119, 155, 191, 228], prices: ['0.83720', '0.83450', '0.83180', '0.82910', '0.82640', '0.82370', '0.82100'], times: [[434, '23 May 08:00'], [505, '26 May 00:00'], [577, '26 May 16:00'], [649, '27 May 08:00'], [720, '28 May 00:00'], [792, '28 May 16:00']] });
add(u, 'path', { class: 'bid', d: 'M4 129.500H801' });
add(u, 'path', { d: 'M4 142.500H801', stroke: '#0a9a0a', 'stroke-dasharray': '4 3' });
chf.split(' ').forEach((c, i) => {
  const [h, l] = c.split(',').map(v => Math.round(v / 3 - 36));
  const x = Math.round((78 + 13.45 * i) / 3 + 426);
  const s = (l - h);
  add(u, 'path', { class: 'wick', d: `M${x + .5} ${h}v${s}M${x - 1} ${Math.round(h + s * (i % 3 + 1) / 5) + .5}h2M${x} ${Math.round(h + s * (5 - i % 2) / 6) + .5}h3` });
});
line(u, 'ma', '68,540 100,555 130,590 180,648 240,725 290,765 325,790 360,796 440,786 480,790 540,784 600,795 640,818 685,800 720,770 750,725 780,695 820,630 860,575 905,555 930,555 965,535 1010,528 1040,533 1095,522', 426, -36);
add(u, 'path', { d: 'M6 14l8 9', stroke: '#b01010' });
add(u, 'circle', { cx: 788, cy: 147, r: 7, fill: '#ddd', stroke: '#8d7a70', 'stroke-width': 2 });
add(u, 'path', { d: 'M788 142l5 5h-3v4h-4v-4h-3z', fill: '#1459a8' });
add(u, 'rect', { x: 804, y: 123, width: 44, height: 12, fill: '#708090' });
add(u, 'text', { x: 808, y: 133, class: 'dark' }, '0.82836');

const g = document.getElementById('plot-gbpusd');
grid(g, { left: 4, right: 798, top: 3, bottom: 263, gx: 40, rows: [10, 215, 227, 238], prices: [], times: [[4, '23 May 2025']] });
add(g, 'path', { class: 'axis', d: 'M4 182.500H798' });
add(g, 'text', { x: 8, y: 191 }, 'CCI(14)');
add(g, 'polyline', { points: '4,215 13,221 20,212 27,203', fill: 'none', stroke: '#20a090' });
add(g, 'path', { class: 'wick', d: 'M245.500 8v40M253.500 20v25M242 24h10' });
add(g, 'rect', { class: 'rise', x: 243, y: 26, width: 5, height: 20 });

const m = document.getElementById('plot-last');
grid(m, { left: 4, right: 798, top: 5, bottom: 264, gx: 40, rows: [32, 68, 104, 140], prices: [], times: [[4, '19 May 2025']] });
add(m, 'path', { class: 'axis', d: 'M4 175.500H798M4 178.500H798' });
add(m, 'text', { x: 8, y: 192 }, 'MACD');
for (let i = 0; i < 6; i++) add(m, 'path', { d: `M${5.5 + i * 4.500} 228v${14 + i * 2}`, stroke: '#b0b0b0' });
add(m, 'polyline', { points: '4,236 14,240 28,242', fill: 'none', stroke: '#b01010', 'stroke-dasharray': '4 2' });

// Tick chart in the order dialog
const red = '265,925 270,910 275,920 280,890 285,820 288,835 292,815 296,825 304,752 315,862 322,815 325,835 328,820 335,895 341,880 345,868 350,880 356,955 364,905 373,862 381,942 390,800 398,760 406,705 418,785 427,690 430,705 433,690 437,700 444,800 458,833 465,795 473,755 478,800 481,755 485,770 490,755 497,800 503,610 509,645 514,658 520,630 527,485 533,498 540,455 548,500 552,485 555,500 560,488 565,515 572,488 578,515 582,488 588,460 596,385 600,405 610,290 615,232 618,240 620,232 623,240 625,232 629,365 633,295 640,372 648,325 653,340 658,325 663,340 667,325 668,342 671,295 675,310 681,545 685,465 690,515 695,455 701,545 710,455 720,525 727,525 737,640 744,590 751,548 754,585 757,560 767,628 776,580 779,600 782,565 788,610 793,590 799,610 806,480 812,485 818,358 822,388 830,342 834,355 838,342 842,345 846,385 850,375 854,388 858,375 862,388 866,375 870,388 874,375 878,388 882,375 885,385 890,355 894,368 901,330 906,325 912,370 918,325 922,340 926,325 930,340 933,325 935,580 940,700 945,750 950,815 957,705 963,715 970,640 975,515 982,467 988,545 992,530 996,545 1003,530 1007,690 1014,612 1018,628 1120,628';
const blue = '265,1035 268,1020 272,1035 278,1010 282,990 287,930 290,940 296,920 304,862 316,972 322,945 328,950 335,1005 342,1018 346,990 350,1010 352,990 356,1068 364,1020 373,990 381,1053 387,910 391,930 397,890 402,875 408,832 418,925 427,833 432,845 437,833 443,950 450,945 456,972 465,930 473,880 476,925 481,880 485,895 488,880 492,895 495,880 497,910 503,722 512,798 518,780 522,700 527,630 531,645 540,595 548,640 555,628 565,655 573,628 577,640 588,560 595,515 600,530 610,420 615,370 618,355 621,370 625,358 628,515 633,435 640,515 645,465 648,480 658,455 662,465 668,450 672,405 676,540 681,655 685,615 690,655 695,597 701,690 708,595 714,625 720,670 727,665 737,785 744,730 751,690 755,720 766,768 774,720 780,690 786,720 790,705 797,720 801,660 806,590 812,610 818,485 823,515 830,468 834,485 838,468 842,485 846,480 850,498 854,485 858,498 862,485 866,498 870,485 874,498 878,485 882,498 885,485 890,468 894,480 901,440 906,436 912,480 918,436 922,450 926,436 930,450 935,600 937,780 945,870 950,957 957,845 962,860 970,800 974,650 982,612 988,690 992,680 996,690 1000,680 1003,690 1007,830 1013,755 1020,768 1120,768';
const t = document.getElementById('plot-ticks');
for (let i = 0; i < 7; i++) add(t, 'path', { class: 'soft', d: `M${41.500 + Math.round(i * 35.900)} 6V360` });
['1.13065', '1.13055', '1.13045', '1.13035', '1.13025', '1.13015'].forEach((p, i) => {
  const y = 32 + Math.round(i * 52.600);
  add(t, 'path', { class: 'soft', d: `M5 ${y - .5}H291` });
  add(t, 'path', { d: `M291 ${y - .5}h4`, stroke: '#222' });
  add(t, 'text', { x: 298, y: y + 4 }, p);
});
line(t, 'ask', red, -83, -51);
line(t, 'buy', blue, -83, -51);
add(t, 'path', { d: 'M4 360V5H291V360', fill: 'none', stroke: '#333', 'stroke-width': 1.500 });
add(t, 'text', { x: 7, y: 16 }, 'EURUSD');
add(t, 'rect', { x: 292, y: 152, width: 47, height: 13, fill: '#ff5050' });
add(t, 'text', { x: 298, y: 162, class: 'light' }, '1.13041');
add(t, 'rect', { x: 292, y: 199, width: 47, height: 13, fill: '#0a4ef0' });
add(t, 'text', { x: 298, y: 209, class: 'light' }, '1.13032');
```
FILE: styles.css
```css
* { box-sizing: border-box; }
body { margin: 0; padding: 29px; overflow: hidden; background: #fff; font: 12px/16px "Open Sans", "Noto Sans", sans-serif; color: #1c1c1c; }
button, input, select { font: inherit; color: inherit; margin: 0; padding: 0; border: 0; background: none; border-radius: 0; }
h2, p { margin: 0; font: inherit; }
.sprite { display: none; }
svg { flex: none; }

.frame { height: calc(100vh - 58px); display: flex; padding-top: 35px; background: #000; border-radius: 24px; overflow: hidden; box-shadow: 0 8px 28px rgba(0, 0, 0, .36); }
.frame-art { width: 25px; }
.app { position: relative; flex: 1; min-width: 0; display: flex; flex-direction: column; overflow: hidden; background: #eee; }

.menubar { height: 24px; flex: none; display: flex; align-items: center; gap: 24px; padding: 0 12px; border-bottom: 1px solid #a8a8a8; font-size: 13px; }
.toolbar { height: 35px; flex: none; display: flex; align-items: center; gap: 2px; padding: 1px 0 0 2px; border-bottom: 2px solid #a5a5a5; overflow: hidden; color: #2b6ea3; }
.grip { flex: none; width: 3px; height: 28px; margin-right: 2px; background: repeating-linear-gradient(#a5a5a5 0 2px, transparent 2px 5px); }
.sep { flex: none; width: 1px; height: 28px; margin: 0 2px; background: #8d8d8d; }
.edge { flex: none; width: 1px; height: 33px; background: #a0a0a0; }
.tool { flex: none; width: 34px; height: 29px; display: flex; align-items: center; justify-content: center; border: 1px solid transparent; }
.tool--on { background: #c9e6fd; border-color: #9ccff3; border-radius: 3px; }
.tool--combo { width: 42px; gap: 6px; }
.tool--last { margin-right: 2px; }
.tool--ide { font-size: 13px; }
.caret { border: 4px solid transparent; border-top: 5px solid #222; border-bottom: 0; }
.tool--wide { width: auto; gap: 7px; padding: 0 8px; color: #1c1c1c; font-size: 13px; }
.stop { width: 13px; height: 14px; border: 2px solid #d96b62; border-radius: 2px; background: #ffc9c0; }
.tool--gap { margin-left: 2px; }
.tool--user { position: relative; }
.badge { position: absolute; top: 0; right: 2px; width: 18px; height: 18px; border-radius: 9px; background: #dc2a1e; color: #fff; font-weight: 400; line-height: 18px; }
.tool--lvl { flex-direction: column; color: #2fae3f; font-size: 9px; line-height: 9px; font-weight: 700; }
.meter { flex: none; width: 60px; height: 16px; border: 1px solid #777; background: linear-gradient(90deg, #3bd23b 6px, #fff 6px); }

.workspace { flex: 1; min-height: 0; display: flex; }
.sidebar { flex: none; width: 431px; display: flex; flex-direction: column; }
.panel { flex: none; padding: 2px 4px 0 2px; border-left: 1px solid #fff; border-bottom: 2px solid #b9b9b9; overflow: hidden; }
.panel--market { height: 316px; }
.panel--data { height: 164px; }
.panel--nav { height: 211px; }
.panel--box { flex: 1; min-height: 0; border-bottom: 0; padding-left: 1px; }
.panel-title { display: flex; height: 16px; }
.panel-title h2 { flex: 1; padding-left: 2px; line-height: 14px; height: 15px; background: linear-gradient(90deg, #b5c6d9, #cfdff0); }
.panel-title button { width: 16px; font-size: 16px; font-weight: 700; line-height: 14px; color: #000; }
.panel-body { display: flex; border: 1px solid #a0a0a0; border-right: 0; border-bottom: 0; overflow: hidden; }
.panel--market .panel-body { height: 267px; }
.panel table { width: 402px; flex: none; border-collapse: collapse; table-layout: fixed; }
.quotes { height: 273px; background: #dcfefe; text-align: right; color: #d8262c; }
.quotes th { height: 27px; padding: 0 6px; background: #fff; color: #1c1c1c; font-weight: 400; font-size: 13px; border-right: 1px solid #ddd; white-space: nowrap; }
.quotes th:first-child { width: 160px; text-align: left; }
.quotes th:last-child { width: 83px; }
.quotes td { padding: 0 4px; line-height: 18px; border-right: 1px solid #c4c4c4; border-bottom: 1px solid #bdbdbd; }
.quotes td:first-child { text-align: left; padding-left: 7px; color: #1c1c1c; font-size: 13px; }
.quotes td:first-child svg { margin-right: 8px; }
.quotes td:last-child, .quotes th:last-child { border-right: 0; }
.quotes .hot { background: #8ff88f; }
.quotes .sel { background: #dcebfb; }
.quotes .up, .quotes .pos { color: #1a2ae0; }
.quotes .neg { color: #d8262c; }
.rail { flex: 1; }
.thumb { display: block; width: 2px; height: 152px; margin: 19px 0 0 10px; background: #8c8c8c; }
.thumb--short { height: 52px; }
.tabs { display: flex; height: 26px; border-top: 2px solid #3c3c3c; }
.tab { margin-top: 3px; height: 15px; padding: 0 11px; line-height: 15px; border-right: 2px solid #999; color: #777; }
.tab:last-child { border: 0; }
.tab--on { margin: -2px 0 0 3px; height: 23px; border: 2px solid #3c3c3c; border-top: 0; background: #fff; color: #1c1c1c; line-height: 20px; }
.values { background: #fff; text-align: right; }
.values th { width: 216px; height: 22px; padding: 0 0 0 24px; font-weight: 400; text-align: left; font-size: 13px; }
.values th svg { margin-left: -22px; margin-right: 6px; vertical-align: middle; }
.values td { padding: 0 4px; border-left: 1px solid #c4c4c4; }
.values tr { border-bottom: 1px solid #bdbdbd; }
.values tr:nth-child(even) { background: #e6e6e6; }
.tree { height: 162px; padding: 7px 9px; border: 1px solid #a0a0a0; background: #fff; }
.tree i { display: block; width: 9px; height: 9px; margin-bottom: 13px; border: 1px solid #888; background: #dfe6f0; }
.tree .skip { visibility: hidden; }
.tree-foot { width: 30px; height: 24px; margin-left: 3px; border: solid #222; border-width: 0 0 2px 2px; }
.box-close { display: block; width: 14px; height: 18px; font-size: 16px; font-weight: 700; line-height: 16px; color: #000; }
.box-title { width: 14px; height: 163px; writing-mode: vertical-rl; transform: rotate(180deg); line-height: 14px; padding-top: 14px; background: #b9cade; }

.desk { flex: 1; min-width: 0; display: flex; flex-direction: column; }
.charts { flex: none; display: grid; grid-template-columns: minmax(0, 1fr) 262px; grid-template-rows: 328px 330px; column-gap: 3px; background: #6d6d6d; border-left: 2px solid #777; border-bottom: 8px solid #a0a0a0; }
.chart-window { display: flex; flex-direction: column; margin-top: 2px; background: #efefef; padding: 0 8px 7px 7px; }
.chart-window--first { margin-left: 4px; padding-left: 6px; }
.chart-window--side { padding: 0 0 7px 6px; }
.chart-window--active { background: #dcefff; }
.chart-window header { flex: none; height: 33px; padding: 6px 14px 0 4px; display: flex; align-items: flex-start; gap: 7px; font-size: 13px; line-height: 19px; color: #777; }
.chart-window--active header { color: #1c1c1c; }
.win-btns { margin-left: auto; display: flex; gap: 28px; padding-top: 5px; }
.win-btns button, .dlg-btns button { display: flex; }
.win-btns svg, .dlg-btns svg { fill: none; stroke: #b5b5b5; stroke-width: 1; }
.chart { position: relative; flex: 1; background: #000; overflow: hidden; outline: 1px solid #888; font: 10px/13px "DejaVu Sans Condensed", "Noto Sans", sans-serif; color: #eee; }
.plot { display: block; }
.plot text { fill: #e8e8e8; }
.plot .dark { fill: #000; }
.plot path { fill: none; }
.plot path[fill] { fill: #708090; }
#plot-usdchf path[fill] { fill: #1459a8; }
.grid { stroke: #53606c; stroke-dasharray: 5 3; }
.axis { stroke: #d8d8d8; fill: none; }
.bid { stroke: #708090; }
.wick { stroke: #00dc00; }
.rise { fill: #0a3a0a; stroke: #00dc00; stroke-width: 1; }
.fall { fill: #9cff9c; stroke: #00dc00; stroke-width: 1; }
.ma { fill: none; stroke: #b01010; stroke-width: 1.2; }
.chart-name { position: absolute; left: 9px; top: 9px; display: flex; align-items: center; gap: 6px; white-space: nowrap; font-size: 11px; }
.trade { position: absolute; left: 7px; top: 26px; width: 212px; height: 69px; display: flex; gap: 2px; padding: 1px; background: #000; }
.deal { position: relative; width: 104px; height: 64px; padding: 0 9px 3px 0; display: flex; align-items: flex-end; justify-content: flex-end; gap: 4px; background: linear-gradient(#ff4444, #d01c1c 50%, #9c0000); color: #fff; }
.trade--blue .deal { background: linear-gradient(#4444ff, #1c1cd0 50%, #00009c); }
.deal span { position: absolute; left: 4px; top: 5px; width: 41px; height: 20px; border-bottom: 1px solid rgba(0, 0, 0, .4); font: 12px/16px "Open Sans", sans-serif; color: #fdd; }
.deal--buy span { left: auto; right: 4px; }
.trade--blue .deal span { color: #dde; }
.deal em { font-style: normal; font-size: 13px; line-height: 16px; }
.deal strong { font: 32px/32px "Noto Sans", sans-serif; }
.deal sup { align-self: flex-start; margin-top: 29px; font-size: 14px; line-height: 16px; }
.lot { position: absolute; left: 50px; top: 0; width: 110px; height: 25px; display: flex; border: 2px solid #000; background: #f4f4f4; color: #222; }
.lot button { width: 21px; display: flex; align-items: center; justify-content: center; }
.lot input { flex: 1; width: 0; padding-right: 5px; border: 1px solid #bbb; background: #fff; text-align: right; font: 12px "Open Sans", sans-serif; }
.tri { border: 3px solid transparent; border-bottom: 4px solid #222; border-top: 0; }
.tri--down { border: 3px solid transparent; border-top: 4px solid #222; border-bottom: 0; }

.toolbox { flex: 1; padding-top: 26px; border-top: 2px solid #555; background: linear-gradient(#eee 26px, #fff 26px); }
.positions { width: 100%; border-collapse: collapse; table-layout: fixed; text-align: right; }
.positions thead { border-top: 1px solid #aaa; }
.positions th { font-weight: 400; font-size: 13px; height: 28px; padding: 0 6px; border-right: 1px solid #d8d8d8; }
.positions td { height: 22px; padding: 0 4px; border-right: 1px solid #d8d8d8; }
.positions th:first-child { width: 495px; }
.positions th:nth-child(2), .positions th:nth-child(3) { width: 144px; }
.positions th:nth-child(4) { width: 148px; }
.balance { height: 23px; background: #c0c0c0; }

.dialog { position: absolute; left: 19px; top: 502px; bottom: -40px; width: 869px; display: flex; flex-direction: column; border: 1px solid #c6c6c6; border-radius: 9px; background: #eee; overflow: hidden; box-shadow: 2px 2px 16px rgba(0, 0, 0, .35); font-family: "DejaVu Sans Condensed", "Noto Sans", sans-serif; }
.dialog > header { flex: none; height: 34px; padding: 0 19px 4px 9px; display: flex; align-items: center; background: #f3f3f3; color: #999; font: 13px "Open Sans", sans-serif; }
.dlg-btns { margin-left: auto; display: flex; gap: 39px; }
.dlg-btns svg { stroke: #777; }
.dlg-btns :disabled svg { stroke: #ddd; }
.dlg-body { flex: 1; display: flex; gap: 28px; padding: 9px 28px 0 8px; }
.tick-chart { flex: none; width: 343px; background: #fff; border: 1px solid #777; border-right: 0; font-size: 10px; overflow: hidden; }
.tick-chart text { fill: #222; }
.tick-chart .light { fill: #fff; }
.soft { stroke: #ddd; stroke-dasharray: 5 3; }
.ask { fill: none; stroke: #f06060; stroke-width: 1.2; }
.buy { fill: none; stroke: #1560f0; stroke-width: 1.2; }
.order { flex: 1; min-width: 0; display: grid; grid-template-columns: 90px minmax(0, 1fr); column-gap: 10px; row-gap: 8px; align-content: start; align-items: center; padding-top: 1px; }
.order > label { text-align: right; }
.pick { position: relative; display: flex; }
.pick::after { content: ""; position: absolute; right: 6px; top: 7px; width: 7px; height: 7px; border: solid #888; border-width: 0 1px 1px 0; transform: rotate(45deg); pointer-events: none; }
.pick select { flex: 1; height: 24px; padding: 0 0 0 3px; appearance: none; border: 1px solid #c8c8c8; border-radius: 2px; background: #fdfdfd; }
.pick--main select { border-color: #888; padding-left: 4px; }
.order .row-volume { margin-top: 23px; }
.row-fields { display: flex; align-items: center; }
.row-fields input { width: 89px; height: 22px; padding-right: 6px; text-align: right; background: #fff; border-bottom: 1px solid #888; }
.spin { display: flex; flex-direction: column; gap: 1px; width: 16px; margin-left: 3px; }
.spin button { height: 10px; display: flex; align-items: center; justify-content: center; background: #f8f8f8; border: 1px solid #ccc; }
.unit { margin-left: 10px; }
.tp { margin: 0 10px 0 auto; }
.comment { height: 22px; background: #fff; border-bottom: 1px solid #888; }
.price { grid-column: 1 / -1; margin: 19px 0 23px; text-align: center; font: 30px/36px "DejaVu Sans Condensed", "Noto Sans", sans-serif; color: #111; }
.price small { font-size: 21px; }
.actions { grid-column: 1 / -1; display: flex; gap: 28px; }
.act { flex: 1; height: 24px; border: 1px solid #b25656; border-radius: 2px; background: linear-gradient(#f39a9a, #b05050); }
.act--buy { border-color: #7189bd; background: linear-gradient(#b2c8f5, #6880b3); }
.note { grid-column: 1 / -1; height: 60px; margin-top: 3px; border: 1px solid #bbb; border-radius: 2px; }

.menu { position: absolute; padding: 3px 2px 3px 3px; background: #eee; border: 1px solid #a8a8a8; box-shadow: 2px 2px 4px rgba(0, 0, 0, .5); font-size: 13px; }
.menu--main { right: 0; top: 133px; width: 231px; border-right: 0; }
.menu--sub { right: 230px; top: 158px; width: 233px; }
.menu button { width: 100%; height: 26px; display: flex; align-items: center; gap: 4px; padding-right: 3px; text-align: left; white-space: nowrap; }
.menu button svg { width: 26px; padding: 0 4px; height: 24px; }
.menu .on svg { background: #d2e0ee; outline: 1px solid #b5bfca; outline-offset: -1px; }
.menu kbd { margin-left: auto; font: inherit; font-size: 12px; }
.menu .hover { background: #0a70d6; color: #fff; }
.menu button:disabled { color: #858585; }
.more { margin: 0 5px 0 auto; border: 5px solid transparent; border-left-color: currentColor; border-right: 0; }
.menu hr { height: 1px; margin: 4px 0; border: 0; background: #aaa; }
```
